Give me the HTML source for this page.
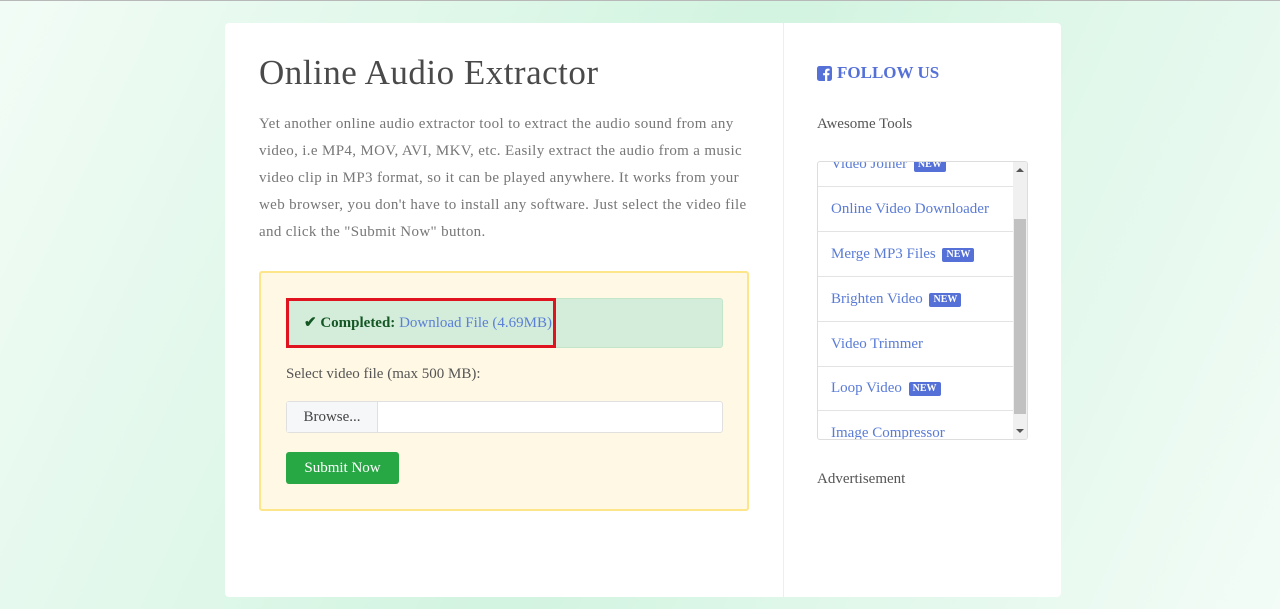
<!DOCTYPE html>
<html><head><meta charset="utf-8"><style>
*{box-sizing:border-box;margin:0;padding:0}
body{width:1280px;height:609px;overflow:hidden;font-family:"Liberation Serif",serif;background:linear-gradient(115deg,#f2fcf6 0%,#d2f4e0 50%,#f3fcf7 100%);border-top:1px solid #b8b8b8;position:relative}
.card{position:absolute;left:225px;top:22px;width:836px;height:574px;background:#fff;border-radius:4px}
.div{position:absolute;left:558px;top:0;width:1px;height:574px;background:#eee}
h1{position:absolute;left:34px;top:30px;font-weight:400;font-size:35px;color:#4a4a4a;letter-spacing:.5px}
.p{position:absolute;left:34px;top:88px;width:492px;font-size:15px;line-height:27px;color:#777;letter-spacing:.35px}
.box{position:absolute;left:34px;top:248px;width:490px;height:240px;background:#fff8e4;border:2px solid #fde58a;border-radius:3px}
.alert{position:absolute;left:25px;top:25px;width:437px;height:50px;background:#d4edda;border:1px solid #c3e6cb;border-radius:3px}
.red{position:absolute;left:-1px;top:-1px;width:270px;height:50px;border:3px solid #e0141e}
.alert .t{position:absolute;left:17px;top:14px;font-size:15px;color:#155724}
.alert a{color:#5b7fd6;text-decoration:none}
.lbl{position:absolute;left:25px;top:93px;font-size:15px;color:#555}
.file{position:absolute;left:25px;top:128px;width:437px;height:32px;border:1px solid #e0e0e0;border-radius:3px;background:#fff}
.file span{position:absolute;left:0;top:0;width:91px;height:30px;background:#f6f7f9;border-right:1px solid #e0e0e0;font-size:15px;color:#444;line-height:30px;text-align:center}
.btn{position:absolute;left:25px;top:179px;width:113px;height:32px;background:#28a745;border-radius:3px;color:#fff;font-size:15px;line-height:32px;text-align:center}
.fol{position:absolute;left:592px;top:40px;font-size:17px;font-weight:700;color:#5571d8;display:flex;align-items:center;gap:5px}
.aw{position:absolute;left:592px;top:93px;font-size:15px;color:#555}
.list{position:absolute;left:592px;top:138px;width:211px;height:279px;border:1px solid #ddd;border-radius:3px;overflow:hidden}
.it{position:absolute;left:0;width:196px;height:45px;border-bottom:1px solid #e3e3e3;padding-left:13px;font-size:15px;color:#5a7bd6;line-height:44px}
.new{display:inline-block;background:#5571d8;color:#fff;font-size:10px;font-weight:700;padding:0 4px;line-height:14px;border-radius:2px;vertical-align:1px;margin-left:3px}
.sb{position:absolute;right:0;top:0;width:14px;height:277px;background:#f0f0f0}
.th{position:absolute;left:1px;top:57px;width:12px;height:195px;background:#c1c1c1}
.ad{position:absolute;left:592px;top:448px;font-size:15px;color:#555}
</style></head><body>
<div class="card">
<div class="div"></div>
<h1>Online Audio Extractor</h1>
<div class="p">Yet another online audio extractor tool to extract the audio sound from any video, i.e MP4, MOV, AVI, MKV, etc. Easily extract the audio from a music video clip in MP3 format, so it can be played anywhere. It works from your web browser, you don't have to install any software. Just select the video file and click the "Submit Now" button.</div>
<div class="box">
<div class="alert"><div class="red"></div><div class="t"><b>✔ Completed:</b> <a>Download File (4.69MB)</a></div></div>
<div class="lbl">Select video file (max 500 MB):</div>
<div class="file"><span>Browse...</span></div>
<div class="btn">Submit Now</div>
</div>
<div class="fol"><svg width="15" height="15" viewBox="0 0 15 15"><rect width="15" height="15" rx="2.5" fill="#5571d8"/><path d="M10.3 15V9.3h1.9l.3-2.2h-2.2V5.7c0-.6.2-1.1 1.1-1.1h1.2V2.7c-.2 0-.9-.1-1.7-.1-1.7 0-2.9 1-2.9 2.9v1.6H6.1v2.2H8V15z" fill="#fff"/></svg>FOLLOW US</div>
<div class="aw">Awesome Tools</div>
<div class="list">
<div class="it" style="top:-20px">Video Joiner <span class="new">NEW</span></div>
<div class="it" style="top:25px">Online Video Downloader</div>
<div class="it" style="top:70px">Merge MP3 Files <span class="new">NEW</span></div>
<div class="it" style="top:115px">Brighten Video <span class="new">NEW</span></div>
<div class="it" style="top:160px">Video Trimmer</div>
<div class="it" style="top:204px">Loop Video <span class="new">NEW</span></div>
<div class="it" style="top:249px">Image Compressor</div>
<div class="sb"><div style="position:absolute;left:3px;top:6px;border:4px solid transparent;border-bottom:4px solid #555;border-top:0"></div><div class="th"></div><div style="position:absolute;left:3px;bottom:6px;border:4px solid transparent;border-top:4px solid #555;border-bottom:0"></div></div>
</div>
<div class="ad">Advertisement</div>
</div>
</body></html>
